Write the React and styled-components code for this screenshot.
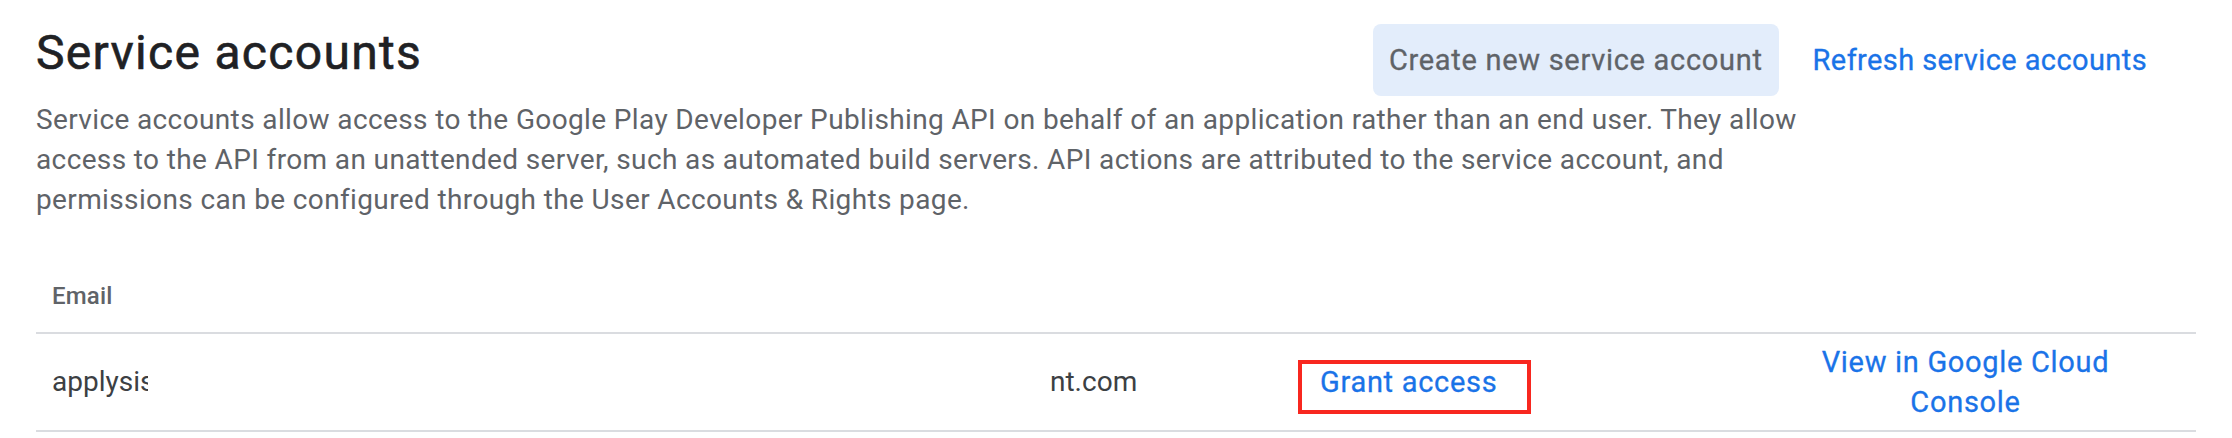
import React from "react";
import styled, { createGlobalStyle } from "styled-components";

const Global = createGlobalStyle`
  html, body { margin: 0; padding: 0; background: #ffffff; }
  body { font-family: Roboto, "Liberation Sans", Arial, sans-serif; -webkit-font-smoothing: antialiased; }
`;

const Page = styled.div`
  width: 2232px;
  box-sizing: border-box;
  padding: 0 36px;
`;

const Header = styled.div`
  display: flex;
  align-items: flex-start;
  justify-content: space-between;
  padding-top: 24px;
`;

const Title = styled.h1`
  margin: 2px 0 0;
  font-family: Roboto, sans-serif;
  font-weight: 400;
  font-size: 48px;
  line-height: 54px;
  letter-spacing: 1.3px;
  color: #202124;
  -webkit-text-stroke: 0.6px #202124;
`;

const Actions = styled.div`
  display: flex;
  align-items: center;
  gap: 18px;
  margin-right: 33px;
`;

const Button = styled.button`
  height: 72px;
  padding: 0 16px;
  border: none;
  border-radius: 8px;
  font-family: Roboto, sans-serif;
  font-weight: 400;
  font-size: 29px;
  line-height: 72px;
  letter-spacing: ${(p) => (p.$tonal ? "0.7px" : "0.4px")};
  cursor: pointer;
  background: ${(p) => (p.$tonal ? "#e3edfb" : "transparent")};
  color: ${(p) => (p.$tonal ? "#5f6368" : "#1a73e8")};
  -webkit-text-stroke: 0.3px ${(p) => (p.$tonal ? "#5f6368" : "#1a73e8")};
`;

const Description = styled.p`
  margin: 4px 0 0;
  max-width: 1810px;
  font-size: 28px;
  line-height: 40px;
  letter-spacing: 0.37px;
  color: #5f6368;
`;

const Table = styled.div`
  margin-top: 42px;
  display: grid;
  grid-template-columns: 1246px 453px 461px;
`;

const HeadCell = styled.div`
  padding: 20px 16px 22px;
  font-size: 24px;
  font-weight: 500;
  line-height: 28px;
  letter-spacing: 0.2px;
  color: #5f6368;
  border-bottom: 2px solid #dadce0;
`;

const Cell = styled.div`
  display: flex;
  align-items: center;
  justify-content: ${(p) => (p.$center ? "center" : "flex-start")};
  text-align: ${(p) => (p.$center ? "center" : "left")};
  padding: 8px 16px;
  min-height: 80px;
  font-size: 28px;
  line-height: 40px;
  color: #3c4043;
  border-bottom: 2px solid #dadce0;
`;

const Clipped = styled.span`
  display: inline-block;
  width: ${(p) => p.$w}px;
  overflow: hidden;
  white-space: nowrap;
  color: #3c4043;
`;

const Tail = styled.span`
  margin-left: ${(p) => p.$gap}px;
  color: #3c4043;
`;

const Link = styled.a`
  font-size: 29px;
  font-weight: 400;
  letter-spacing: 0.7px;
  color: #1a73e8;
  -webkit-text-stroke: 0.3px #1a73e8;
  text-decoration: none;
  cursor: pointer;
`;

const Highlight = styled.span`
  display: inline-block;
  margin-top: 9px;
  padding: 0 30px 9px 18px;
  border: 4px solid #f8271f;
  line-height: 36px;
`;

export default function App() {
  return (
    <>
      <Global />
      <Page>
        <Header>
          <Title>Service accounts</Title>
          <Actions>
            <Button $tonal>Create new service account</Button>
            <Button>Refresh service accounts</Button>
          </Actions>
        </Header>
        <Description>
          Service accounts allow access to the Google Play Developer Publishing API on behalf of an
          application rather than an end user. They allow access to the API from an unattended
          server, such as automated build servers. API actions are attributed to the service
          account, and permissions can be configured through the User Accounts &amp; Rights page.
        </Description>
        <Table>
          <HeadCell>Email</HeadCell>
          <HeadCell />
          <HeadCell />
          <Cell>
            <Clipped $w={96}>applysis</Clipped>
            <Tail $gap={902}>nt.com</Tail>
          </Cell>
          <Cell>
            <Highlight>
              <Link>Grant access</Link>
            </Highlight>
          </Cell>
          <Cell $center>
            <Link>
              View in Google Cloud
              <br />
              Console
            </Link>
          </Cell>
        </Table>
      </Page>
    </>
  );
}
